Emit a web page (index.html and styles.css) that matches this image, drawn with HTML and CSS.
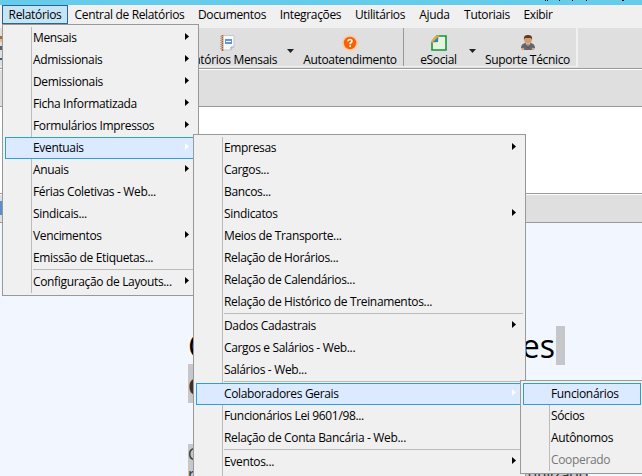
FILE: index.html
```
<!DOCTYPE html>
<html lang="pt-BR">
<head>
  <meta charset="UTF-8" />
  <title>Folha de Pagamento</title>
  <link rel="stylesheet" href="styles.css">
</head>
<body>
  <div class="window">
    <div class="titlebar">
      <svg width="110" height="2" viewBox="0 0 110 2"><path d="M13 0h1v1h-1zM15 0h1v1h-1zM27 0h1v1h-1zM40 0h1v1h-1zM54 0h1v1h-1zM90 0h2v1h-2z"/></svg>
    </div>

    <!-- Barra de menus -->
    <nav class="menubar">
      <span class="active">Relatórios</span>
      <span>Central de Relatórios</span>
      <span>Documentos</span>
      <span>Integrações</span>
      <span>Utilitários</span>
      <span>Ajuda</span>
      <span>Tutoriais</span>
      <span>Exibir</span>
    </nav>

    <!-- Barra de ferramentas -->
    <div class="toolbar">
      <div class="tools">
        <div class="edge">
          <svg width="2" height="38" viewBox="0 0 2 38">
            <path d="M0 8h2v3H0z" fill="#a86a3c"/>
            <path d="M0 11h2v3H0z" fill="#e6bd93"/>
            <path d="M0 18h2v4H0z" fill="#5c5f64"/>
            <path d="M0 30h2v2H0z" fill="#2b5f8c"/>
          </svg>
        </div>
        <div class="tool monthly">
          <svg width="16" height="16" viewBox="0 0 16 16">
            <path d="M2 .5h12v11l-3 3.5H2z" fill="#f8f9fc" stroke="#c4c8ce"/>
            <path d="M11 15v-3h3" fill="#ddd" stroke="#aaa"/>
            <path d="M2.5 0v16" stroke="#b45a24" stroke-width="1.6"/>
            <path d="M0 1.5h3M0 3.5h3M0 5.5h3M0 7.5h3M0 9.5h3M0 11.5h3M0 13.5h3" stroke="#bba491"/>
            <path d="M5 4h7v5H5z" fill="#5d96dc"/>
            <path d="M6 6.5h5" stroke="#fff"/>
          </svg>
          <span>Relatórios Mensais</span>
        </div>
        <div class="drop"></div>
        <div class="tool help">
          <svg width="16" height="16" viewBox="0 0 16 16">
            <circle cx="8" cy="8" r="7.8" fill="#ffc9a3"/>
            <circle cx="8" cy="8" r="6.2" fill="#fb6003"/>
            <path d="M6 6.3Q6 4.5 8 4.5T10 6.2Q10 7.3 8.2 8.2V9.3M8.2 10.3V12" fill="none" stroke="#fff" stroke-width="1.6"/>
          </svg>
          <span>Autoatendimento</span>
        </div>
        <div class="divider"></div>
        <div class="tool esocial">
          <svg width="16" height="16" viewBox="0 0 16 16">
            <path d="M6 1h9v14H1V7z" fill="#e4f4df" stroke="#12973c" stroke-width="1.6"/>
            <path d="M0 8Q1 2 8 0L7 7z" fill="#e4a83c"/>
            <path d="M2 7L7 2v5z" fill="#2684c8"/>
          </svg>
          <span>eSocial</span>
        </div>
        <div class="drop"></div>
        <div class="tool support">
          <svg width="16" height="16" viewBox="0 0 16 16">
            <path d="M1 13Q1 9 5 8h6q4 1 4 5l-3 2H4z" fill="#62656b"/>
            <path d="M5 7h6l-3 5z" fill="#e4e6ea"/>
            <path d="M7.5 9h1v4h-1z" fill="#444"/>
            <circle cx="8" cy="5" r="3.8" fill="#d79b6c"/>
            <path d="M4 5Q3 0 8 0t4 5l-1-2H5z" fill="#65371f"/>
            <circle cx="3" cy="14" r="1.3" fill="#d7a17b"/>
            <circle cx="13" cy="14" r="1.3" fill="#d7a17b"/>
          </svg>
          <span>Suporte Técnico</span>
        </div>
      </div>
    </div>
    <div class="subbar"></div>
    <div class="panel"></div>
    <div class="tabbar"><div class="tab"></div></div>

    <!-- Documento ao fundo -->
    <div class="document">
      <div class="heading"><span>C</span><span>es<i></i></span></div>
      <div class="subheading">C</div>
      <div class="paragraph">
        <div>C</div>
        <div class="line"><span>r</span><span>utilizado</span></div>
      </div>
    </div>
  </div>

  <div class="menu reports">
    <div class="item sub">Mensais</div>
    <div class="item sub">Admissionais</div>
    <div class="item sub">Demissionais</div>
    <div class="item sub">Ficha Informatizada</div>
    <div class="item sub">Formulários Impressos</div>
    <div class="item sub selected">Eventuais</div>
    <div class="item sub">Anuais</div>
    <div class="item">Férias Coletivas - Web...</div>
    <div class="item">Sindicais...</div>
    <div class="item sub">Vencimentos</div>
    <div class="item">Emissão de Etiquetas...</div>
    <hr>
    <div class="item sub">Configuração de Layouts...</div>
  </div>

  <div class="menu occasional">
    <div class="item sub">Empresas</div>
    <div class="item">Cargos...</div>
    <div class="item">Bancos...</div>
    <div class="item sub">Sindicatos</div>
    <div class="item">Meios de Transporte...</div>
    <div class="item">Relação de Horários...</div>
    <div class="item">Relação de Calendários...</div>
    <div class="item">Relação de Histórico de Treinamentos...</div>
    <hr>
    <div class="item sub">Dados Cadastrais</div>
    <div class="item">Cargos e Salários - Web...</div>
    <div class="item">Salários - Web...</div>
    <hr>
    <div class="item sub selected">Colaboradores Gerais</div>
    <div class="item">Funcionários Lei 9601/98...</div>
    <div class="item">Relação de Conta Bancária - Web...</div>
    <hr>
    <div class="item sub">Eventos...</div>
  </div>

  <div class="menu staff">
    <div class="item selected">Funcionários</div>
    <div class="item">Sócios</div>
    <div class="item">Autônomos</div>
    <div class="item disabled">Cooperado</div>
  </div>
</body>
</html>
```
FILE: styles.css
```
* {
  box-sizing: border-box;
}

body {
  position: relative;
  margin: 0;
  width: 642px;
  height: 476px;
  overflow: hidden;
  font-family: "Open Sans", "Noto Sans", sans-serif;
  font-size: 12px;
  letter-spacing: -0.34px;
  color: #000;
  background: #f1f6ff;
}

.window {
  display: flex;
  flex-direction: column;
  height: 476px;
}

.titlebar {
  display: flex;
  justify-content: flex-end;
  height: 5px;
  background: #66ccec;
}

.menubar {
  display: grid;
  grid-template-columns: 66px 123px 82px 75px 64px 45px 60px 42px;
  height: 21px;
  padding-left: 2px;
  background: #f0f0f0;
}

.menubar span {
  height: 20px;
  line-height: 20px;
  text-align: center;
  white-space: nowrap;
}

.menubar .active {
  height: 19px;
  border: 1px solid #2a6496;
  background: #c5e5f5;
  line-height: 18px;
}

.toolbar {
  height: 44px;
  border-top: 2px solid #f0f0f0;
  border-bottom: 1px solid #fff;
  background: #dfdfdf;
  box-shadow: inset 0 -1px #999;
}

.tools {
  display: flex;
  width: 578px;
  height: 39px;
  border-right: 2px solid #f0f0f0;
  border-bottom: 1px solid #f0f0f0;
}

.edge {
  width: 175px;
}

.tool {
  display: flex;
  flex-direction: column;
  align-items: center;
  padding-top: 7px;
  white-space: nowrap;
}

.tool svg {
  flex-shrink: 0;
}

.tool span {
  line-height: 18px;
}

.monthly {
  width: 105px;
}

.help {
  width: 100px;
}

.esocial {
  width: 69px;
}

.support {
  width: 85px;
}

.drop {
  width: 20px;
}

.drop::before {
  content: "";
  display: block;
  width: 7px;
  height: 4px;
  margin: 21px 0 0 7px;
  background: #222;
  clip-path: polygon(0 0, 100% 0, 50% 100%);
}

.esocial + .drop {
  width: 12px;
}

.esocial + .drop::before {
  margin-left: -4px;
}

.divider {
  width: 1px;
  height: 38px;
  margin-left: 3px;
  background: #999;
}

.subbar {
  height: 37px;
  border-bottom: 1px solid #999;
  background: #dfdfdf;
}

.panel {
  height: 87px;
  border-bottom: 1px solid #999;
  background: #fff;
}

.tabbar {
  height: 29px;
  border-top: 1px solid #fff;
  border-bottom: 1px solid #999;
  background: #dfdfdf;
}

.tab {
  width: 2px;
  height: 14px;
  margin-top: 6px;
  background: #5b8fca;
}

.document {
  flex: 1;
  padding: 103px 77px 0 188px;
  overflow: hidden;
}

.heading {
  display: flex;
  justify-content: space-between;
  height: 38px;
  font-size: 32px;
  line-height: 40px;
  letter-spacing: 0;
}

.heading span {
  display: flex;
}

.heading i {
  width: 9px;
  height: 39px;
  margin-left: 1px;
  background: #c5c7cb;
}

.subheading {
  width: 30px;
  height: 39px;
  background: #c5c7cb;
  color: #333;
  font-size: 24px;
  font-weight: bold;
  line-height: 44px;
}

.paragraph {
  width: 400px;
  height: 40px;
  margin-top: 41px;
  background: #c5c7cb;
  color: #333;
  font-size: 16px;
  line-height: 20px;
}

.line {
  display: flex;
  justify-content: space-between;
}

/* Menus suspensos */
.menu {
  position: absolute;
  padding: 2px;
  border: 1px solid #999;
  background: #f0f0f0;
}

.menu::before {
  content: "";
  position: absolute;
  left: 28px;
  top: 2px;
  bottom: 2px;
  width: 1px;
  background: #bbb;
}

.reports {
  left: 2px;
  top: 24px;
  width: 197px;
}

.occasional {
  left: 193px;
  top: 134px;
  width: 333px;
  height: 350px;
}

.staff {
  left: 520px;
  top: 380px;
  width: 124px;
}

.item {
  position: relative;
  height: 22px;
  padding-left: 28px;
  line-height: 22px;
  white-space: nowrap;
}

.sub::after {
  content: "";
  position: absolute;
  right: 7px;
  top: 6px;
  width: 4px;
  height: 7px;
  background: #000;
  clip-path: polygon(0 0, 100% 50%, 0 100%);
}

.selected {
  border: 1px solid #2d9fd8;
  padding-left: 27px;
  line-height: 20px;
  background: #dbeaff;
}

.sub.selected::after {
  right: 6px;
  top: 5px;
  background: #fff;
}

.disabled {
  color: #777;
}

hr {
  height: 1px;
  margin: 0 0 1px 28px;
  border: 0;
  background: #bbb;
}
```
